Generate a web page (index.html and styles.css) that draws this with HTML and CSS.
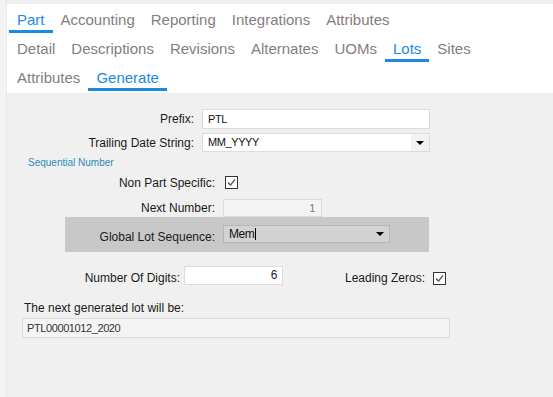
FILE: index.html
```html
<!DOCTYPE html>
<html lang="en">

<head>
    <meta charset="UTF-8" />
    <meta name="viewport" content="width=device-width, initial-scale=1.0" />
    <title>Part - Lots - Generate</title>
    <link rel="stylesheet" href="styles.css">
</head>

<body>
    <div class="page">
        <nav class="tabs">
            <div class="tab-row">
                <span class="tab active">Part</span>
                <span class="tab">Accounting</span>
                <span class="tab">Reporting</span>
                <span class="tab">Integrations</span>
                <span class="tab">Attributes</span>
            </div>
            <div class="tab-row">
                <span class="tab">Detail</span>
                <span class="tab">Descriptions</span>
                <span class="tab">Revisions</span>
                <span class="tab">Alternates</span>
                <span class="tab">UOMs</span>
                <span class="tab active">Lots</span>
                <span class="tab">Sites</span>
            </div>
            <div class="tab-row">
                <span class="tab">Attributes</span>
                <span class="tab active">Generate</span>
            </div>
        </nav>

        <div class="form">
            <div class="row">
                <label class="field-label prefix-label">Prefix:</label>
                <div class="text-box wide">PTL</div>
            </div>
            <div class="row trailing-row">
                <label class="field-label prefix-label">Trailing Date String:</label>
                <div class="combo wide">
                    <span class="combo-value">MM_YYYY</span>
                    <span class="combo-button"><span class="arrow"></span></span>
                </div>
            </div>

            <div class="section-title">Sequential Number</div>

            <div class="row check-row">
                <label class="field-label seq-label">Non Part Specific:</label>
                <span class="checkbox">
                    <svg width="11" height="11" viewBox="0 0 11 11">
                        <path d="M2 5.5 L4.5 8 L9 2.5" fill="none" stroke="#555" stroke-width="1.2" />
                    </svg>
                </span>
            </div>
            <div class="row next-row">
                <label class="field-label seq-label">Next Number:</label>
                <div class="text-box number disabled">1</div>
            </div>

            <div class="highlight-band">
                <label class="field-label band-label">Global Lot Sequence:</label>
                <div class="combo band-combo">
                    <span class="combo-value">Mem<span class="caret"></span></span>
                    <span class="combo-button"><span class="arrow"></span></span>
                </div>
            </div>

            <div class="row digits-row">
                <label class="field-label digits-label">Number Of Digits:</label>
                <div class="text-box number digits-box">6</div>
                <label class="field-label zeros-label">Leading Zeros:</label>
                <span class="checkbox zeros-check">
                    <svg width="11" height="11" viewBox="0 0 11 11">
                        <path d="M2 5.5 L4.5 8 L9 2.5" fill="none" stroke="#555" stroke-width="1.2" />
                    </svg>
                </span>
            </div>

            <div class="preview-label">The next generated lot will be:</div>
            <div class="text-box preview disabled">PTL00001012_2020</div>
        </div>
    </div>
</body>

</html>
```

FILE: styles.css
```css
html,
body {
    margin: 0;
    padding: 0;
}

body {
    background: #f3f3f3;
    font-family: "Liberation Sans", Arial, sans-serif;
    width: 553px;
    height: 397px;
    overflow: hidden;
}

.page {
    margin-left: 6px;
    padding-top: 4px;
    height: 393px;
    background: #f0f0f0;
    border-left: 1px solid #e9e9e9;
}

/* tabs */

.tabs {
    background: #fff;
    padding: 0 0 2px 2px;
}

.tab-row {
    display: flex;
}

.tab {
    box-sizing: border-box;
    height: 29px;
    padding: 5px 8px 0 8px;
    line-height: 21px;
    font-size: 15px;
    color: #857d7d;
    border-bottom: 3px solid transparent;
    white-space: nowrap;
}

.tab.active {
    color: #1b8ae2;
    border-bottom-color: #1b8ae2;
}

/* form */

.form {
    padding-top: 16px;
    font-size: 12px;
    color: #1a1a1a;
}

.row {
    display: flex;
    align-items: center;
}

.field-label {
    text-align: right;
    white-space: nowrap;
}

.prefix-label {
    width: 187px;
    margin-right: 8px;
}

.seq-label {
    width: 208px;
    margin-right: 8px;
}

.text-box,
.combo {
    box-sizing: border-box;
    background: #fff;
    border: 1px solid #dcdcdc;
    font-size: 11px;
    letter-spacing: -0.4px;
    color: #111;
}

.text-box {
    height: 20px;
    line-height: 18px;
    padding: 0 5px;
}

.wide {
    width: 228px;
}

.trailing-row {
    margin-top: 4px;
}

.combo {
    display: flex;
    height: 19px;
}

.combo-value {
    flex: 1;
    padding-left: 5px;
    line-height: 17px;
}

.combo-button {
    width: 18px;
    background: #f2f2f2;
    display: flex;
    align-items: center;
    justify-content: center;
}

.arrow {
    width: 0;
    height: 0;
    border-left: 4px solid transparent;
    border-right: 4px solid transparent;
    border-top: 4px solid #000;
}

.section-title {
    margin: 5px 0 0 21px;
    font-size: 10px;
    line-height: 12px;
    color: #2a8cb8;
}

.check-row {
    margin-top: 7px;
    height: 13px;
}

.checkbox {
    box-sizing: border-box;
    width: 13px;
    height: 13px;
    border: 1px solid #333;
    background: #fff;
    margin-left: 2px;
    display: flex;
}

.next-row {
    margin-top: 10px;
}

.number {
    width: 99px;
    height: 18px;
    line-height: 16px;
    text-align: right;
    padding-right: 6px;
}

.disabled {
    background: #f4f4f4;
    color: #333;
}

.next-row .number {
    color: #6d7d8f;
}

.highlight-band {
    display: flex;
    align-items: center;
    margin-left: 58px;
    width: 364px;
    height: 35px;
    padding-bottom: 1px;
    box-sizing: border-box;
    background: #c8c8c8;
}

.band-label {
    width: 150px;
    margin-right: 8px;
    padding-top: 6px;
}

.band-combo {
    width: 167px;
    height: 18px;
    background: #d3d3d3;
    border-color: #b6b6b6;
    font-size: 12px;
}

.band-combo .combo-button {
    background: transparent;
}

.band-combo .combo-value {
    line-height: 16px;
}

.caret {
    display: inline-block;
    width: 1px;
    height: 12px;
    background: #000;
    vertical-align: -2px;
    margin-left: 1px;
}

.digits-row {
    margin-top: 14px;
    align-items: flex-start;
}

.digits-label {
    width: 173px;
    margin-right: 4px;
    padding-top: 5px;
}

.digits-box {
    height: 19px;
    padding-right: 5px;
    font-size: 12px;
    color: #1a1a3a;
}

.zeros-label {
    margin-left: 62px;
    padding-top: 5px;
}

.zeros-check {
    margin: 6px 0 0 8px;
}

.preview-label {
    margin: 16px 0 0 17px;
    line-height: 14px;
}

.preview {
    margin: 3px 0 0 15px;
    width: 428px;
    padding-left: 4px;
}
```
